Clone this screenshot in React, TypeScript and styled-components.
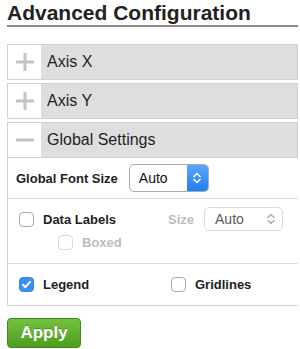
import styled, { createGlobalStyle } from "styled-components";

const GlobalStyle = createGlobalStyle`
    body {
        margin: 0;
        background: #fff;
        font-family: "Liberation Sans", Arial, sans-serif;
        color: #222;
    }
`;

const Wrapper = styled.div`
    width: 300px;
    height: 349px;
    padding: 2px 2px 0 7px;
    box-sizing: border-box;
    overflow: hidden;
`;

const Title = styled.h1`
    margin: 0;
    font-size: 21px;
    font-weight: 700;
    line-height: 22px;
    padding-bottom: 1px;
    border-bottom: 2px solid #8a8a8a;
    color: #222;
`;

const Accordion = styled.div`
    margin-top: 17px;
    display: flex;
    flex-direction: column;
    gap: 3px;
`;

const Header = styled.div`
    display: flex;
    height: 36px;
    box-sizing: border-box;
    border: 1px solid #d2d2d2;
`;

const IconCell = styled.div`
    width: 33px;
    display: flex;
    align-items: center;
    justify-content: center;
    background: #fff;
`;

const HeaderLabel = styled.div`
    flex: 1;
    display: flex;
    align-items: center;
    padding-left: 6px;
    background: #dedede;
    font-size: 16px;
    color: #1e1e1e;
`;

const Panel = styled.div`
    margin-top: -3px;
    border-left: 1px solid #d2d2d2;
    border-bottom: 1px solid #d2d2d2;
`;

const Row = styled.div<{ $h: number; $top?: number }>`
    height: ${(p) => p.$h}px;
    box-sizing: border-box;
    display: flex;
    flex-direction: column;
    justify-content: ${(p) => (p.$top !== undefined ? "flex-start" : "center")};
    padding-top: ${(p) => p.$top ?? 0}px;
    padding-left: 8px;
    border-bottom: 1px solid #dcdcdc;
    &:last-child {
        border-bottom: none;
    }
`;

const Line = styled.div<{ $indent?: number; $gap?: number }>`
    display: flex;
    align-items: center;
    padding-left: ${(p) => p.$indent ?? 0}px;
    margin-top: ${(p) => p.$gap ?? 0}px;
`;

const Col = styled.div`
    width: 148px;
    display: flex;
    align-items: center;
`;

const Label = styled.span<{ $muted?: boolean; $shift?: number }>`
    font-size: 13px;
    font-weight: 700;
    margin-left: ${(p) => p.$shift ?? 0}px;
    color: ${(p) => (p.$muted ? "#bdbdbd" : "#1e1e1e")};
`;

const Box = styled.span<{ $checked?: boolean; $muted?: boolean; $shift?: number }>`
    width: 15px;
    height: 15px;
    box-sizing: border-box;
    border-radius: 4px;
    margin: 0 9px 0 ${(p) => p.$shift ?? 3}px;
    display: inline-flex;
    align-items: center;
    justify-content: center;
    border: 1px solid ${(p) => (p.$checked ? "#2f86ee" : p.$muted ? "#d8d8d8" : "#a8a8a8")};
    background: ${(p) => (p.$checked ? "#3a90f2" : "#fff")};
`;

const Select = styled.div`
    margin-left: 11px;
    width: 80px;
    height: 28px;
    box-sizing: border-box;
    border: 1px solid #ababab;
    border-radius: 5px;
    display: flex;
    overflow: hidden;
    font-size: 14px;
`;

const SelectText = styled.span`
    flex: 1;
    display: flex;
    align-items: center;
    padding-left: 9px;
    color: #111;
`;

const SelectArrow = styled.span`
    width: 21px;
    display: flex;
    align-items: center;
    justify-content: center;
    background: linear-gradient(#5aa6fb, #1f7ff0);
`;

const GhostSelect = styled.div`
    margin-left: 10px;
    width: 79px;
    height: 24px;
    box-sizing: border-box;
    border: 1px solid #dcdcdc;
    border-radius: 5px;
    display: flex;
    align-items: center;
    justify-content: space-between;
    padding: 0 6px 0 10px;
    font-size: 14px;
    color: #5a5a5a;
`;

const ApplyButton = styled.button`
    margin-top: 12px;
    width: 74px;
    height: 30px;
    border: 1px solid #3e8c17;
    border-radius: 4px;
    background: linear-gradient(#74c23f, #4c9c1f);
    color: #fff;
    font-family: "Liberation Sans", Arial, sans-serif;
    font-size: 17px;
    font-weight: 700;
    text-shadow: 0 -1px 0 rgba(0, 0, 0, 0.25);
    padding: 0;
`;

const Sign = ({ plus }: { plus?: boolean }) => (
    <svg width="18" height="18" viewBox="0 0 18 18">
        <rect x="0" y="7.5" width="18" height="3" fill="#c4c4c4" />
        {plus && <rect x="7.5" y="0" width="3" height="18" fill="#c4c4c4" />}
    </svg>
);

const Chevrons = ({ color }: { color: string }) => (
    <svg width="10" height="14" viewBox="0 0 10 14">
        <path
            d="M2 5.5 L5 2.5 L8 5.5 M2 8.5 L5 11.5 L8 8.5"
            fill="none"
            stroke={color}
            strokeWidth="1.6"
            strokeLinecap="round"
            strokeLinejoin="round"
        />
    </svg>
);

const Check = () => (
    <svg width="11" height="11" viewBox="0 0 11 11">
        <path
            d="M2 5.8 L4.4 8.2 L9 2.8"
            fill="none"
            stroke="#fff"
            strokeWidth="2"
            strokeLinecap="round"
            strokeLinejoin="round"
        />
    </svg>
);

const Section = ({ title, open }: { title: string; open?: boolean }) => (
    <Header>
        <IconCell>
            <Sign plus={!open} />
        </IconCell>
        <HeaderLabel>{title}</HeaderLabel>
    </Header>
);

const App = () => {
    return (
        <Wrapper>
            <GlobalStyle />
            <Title>Advanced Configuration</Title>
            <Accordion>
                <Section title="Axis X" />
                <Section title="Axis Y" />
                <Section title="Global Settings" open />
                <Panel>
                    <Row $h={41}>
                        <Line>
                            <Label>Global Font Size</Label>
                            <Select>
                                <SelectText>Auto</SelectText>
                                <SelectArrow>
                                    <Chevrons color="#fff" />
                                </SelectArrow>
                            </Select>
                        </Line>
                    </Row>
                    <Row $h={65} $top={8}>
                        <Line>
                            <Col>
                                <Box />
                                <Label>Data Labels</Label>
                            </Col>
                            <Label $muted $shift={4}>
                                Size
                            </Label>
                            <GhostSelect>
                                Auto
                                <Chevrons color="#b0b0b0" />
                            </GhostSelect>
                        </Line>
                        <Line $indent={39} $gap={4}>
                            <Box $muted />
                            <Label $muted>Boxed</Label>
                        </Line>
                    </Row>
                    <Row $h={41}>
                        <Line>
                            <Col>
                                <Box $checked>
                                    <Check />
                                </Box>
                                <Label>Legend</Label>
                            </Col>
                            <Box $shift={7} />
                            <Label>Gridlines</Label>
                        </Line>
                    </Row>
                </Panel>
            </Accordion>
            <ApplyButton>Apply</ApplyButton>
        </Wrapper>
    );
};

export default App;
